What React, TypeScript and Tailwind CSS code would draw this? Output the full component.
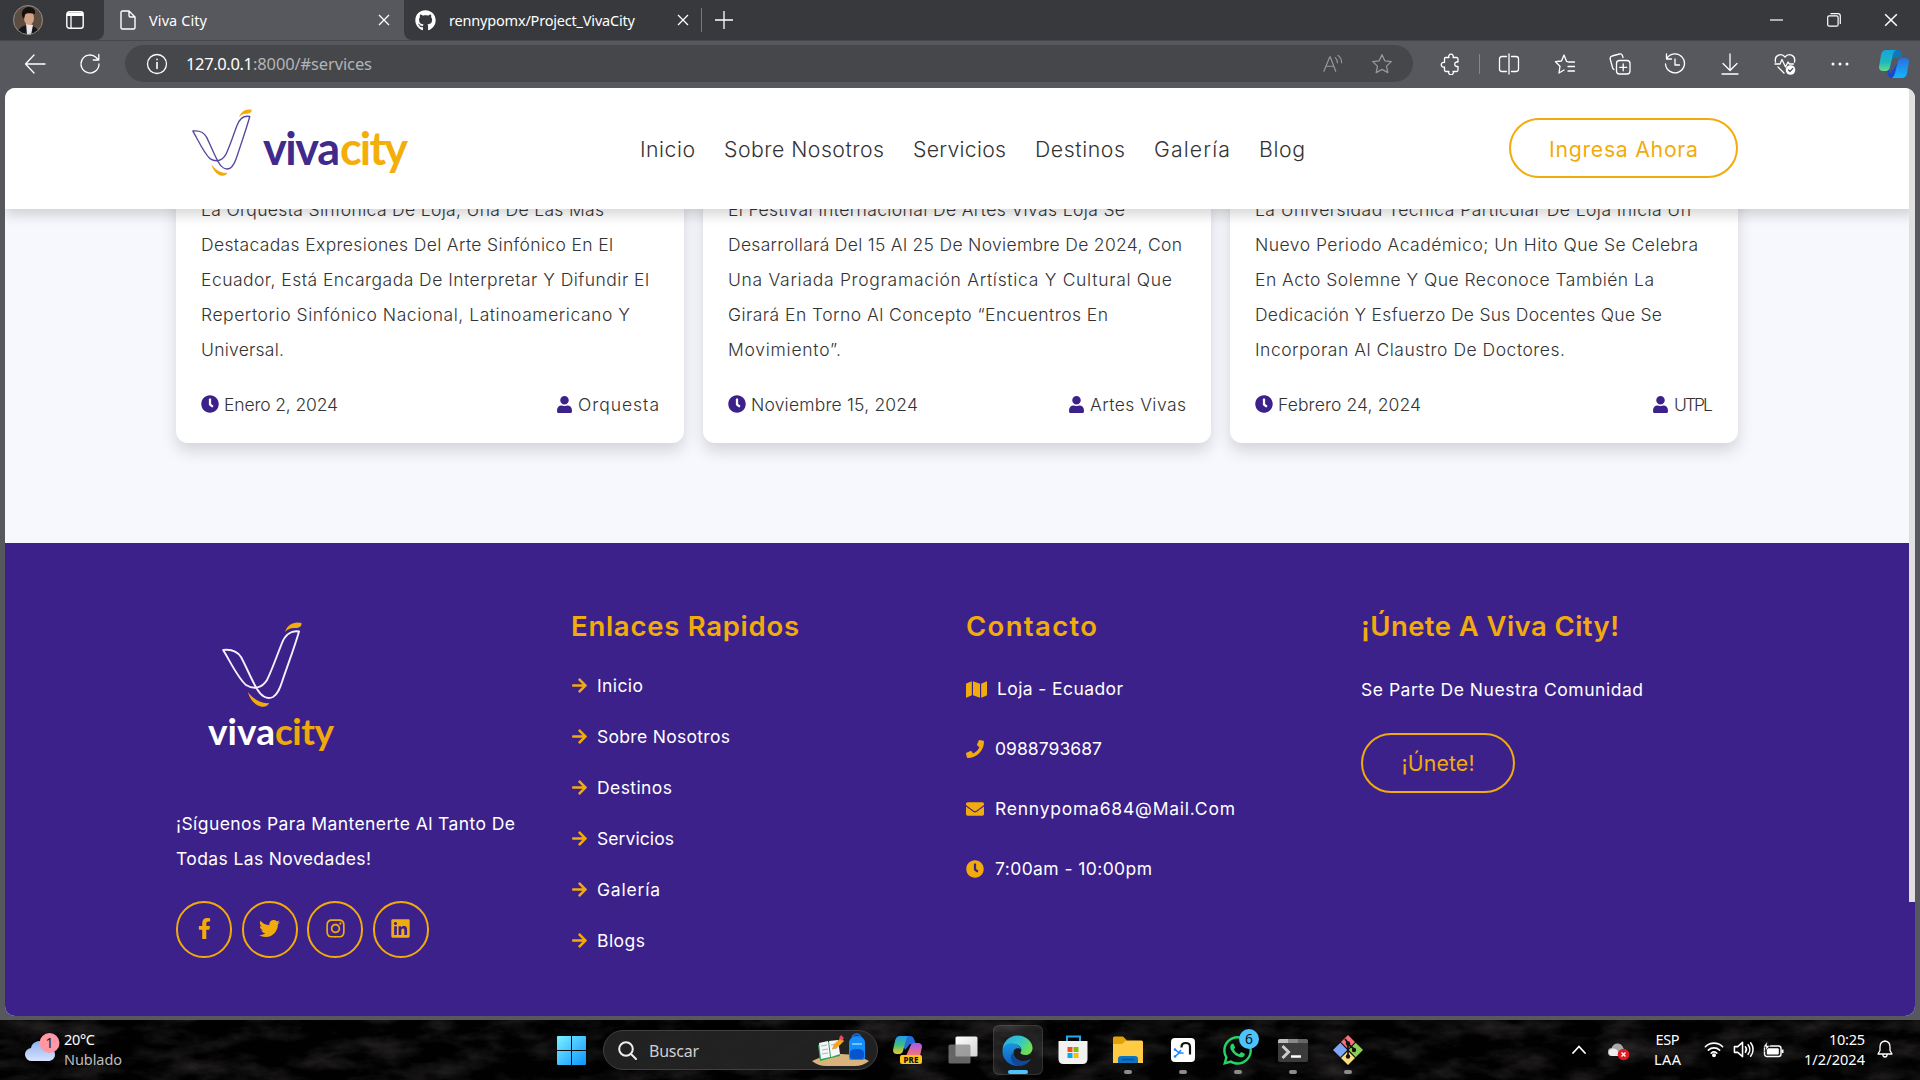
import { useLayoutEffect, useRef, useState } from "react";
import type { ReactNode } from "react";
import {
  FaArrowRight,
  FaClock,
  FaEnvelope,
  FaFacebookF,
  FaGithub,
  FaInstagram,
  FaLinkedin,
  FaMap,
  FaPhone,
  FaTwitter,
  FaUser,
  FaWhatsapp,
} from "react-icons/fa";

/* Text line whose tracking is adjusted so that it fills a given width. */
function Fit({ w, className = "", children }: { w: number; className?: string; children: ReactNode }) {
  const ref = useRef<HTMLSpanElement>(null);
  const [ls, setLs] = useState(0);
  useLayoutEffect(() => {
    const el = ref.current;
    if (!el) return;
    const prev = el.style.letterSpacing;
    el.style.letterSpacing = "0px";
    const natural = el.getBoundingClientRect().width;
    el.style.letterSpacing = prev;
    const n = (el.textContent || "").length;
    if (n > 1) setLs((w - natural) / (n - 1));
  }, [w]);
  return (
    <span className={"block whitespace-nowrap " + className} style={{ width: w }}>
      <span ref={ref} className="inline-block" style={{ letterSpacing: ls + "px" }}>
        {children}
      </span>
    </span>
  );
}

function Slot({ className, children }: { className: string; children?: ReactNode }) {
  return <div className={"flex shrink-0 items-center justify-center " + className}>{children}</div>;
}

function Line({ size = 22, children, className = "", sw = 1.3 }: { size?: number; children: ReactNode; className?: string; sw?: number }) {
  return (
    <svg width={size} height={size} viewBox="0 0 22 22" fill="none" stroke="currentColor" strokeWidth={sw} strokeLinecap="round" strokeLinejoin="round" className={"shrink-0 " + className}>
      {children}
    </svg>
  );
}

function Cross({ size = 12 }: { size?: number }) {
  return (
    <svg width={size} height={size} viewBox="0 0 12 12" stroke="currentColor" strokeWidth="1.3" className="shrink-0">
      <path d="M1 1l10 10M11 1L1 11" />
    </svg>
  );
}

function Mark({ w, h, stroke, sw }: { w: number; h: number; stroke: string; sw: number }) {
  return (
    <svg width={w} height={h} viewBox="0 0 80 85" preserveAspectRatio="none" fill="none" className="shrink-0">
      <path
        d="M1.2 28 C9 27 15 29 19 35 C24 44 29 57 35 67 C39 74 45 78 51 75 C56 72 58 66 60 60 C66 42 72 27 77 9.500 C69 8 63 13 60 21 C54 36 50 48 45 58 C40 66 32 68 24 63 C16 56 9 41 1.200 28 Z"
        stroke={stroke}
        strokeWidth={sw}
        strokeLinejoin="round"
      />
      <path d="M63 10 C65 3 72 -1 79.500 1 C80 5 76 6 72 6 C68 6 66 7 63 10Z" fill="#f2ab0c" />
      <path d="M26 70 C31 77 39 82 47 81 C46 85 40 86 35 83 C30 80 27 75 26 70Z" fill="#f2ab0c" />
    </svg>
  );
}

function TitleBar() {
  return (
    <div className="flex h-10 shrink-0 bg-[#57585d]">
      <div className="flex w-[104px] items-center rounded-br-lg bg-[#38393c]">
        <svg width="30" height="30" viewBox="0 0 30 30" className="ml-[13px]">
          <defs>
            <clipPath id="av"><circle cx="15" cy="15" r="15" /></clipPath>
          </defs>
          <g clipPath="url(#av)">
            <rect width="30" height="30" fill="#5d4c41" />
            <path d="M4 30c1-7 5-9 10-10l6 1c4 2 6 5 6 9z" fill="#15161a" />
            <path d="M13 18l7 2-2 10h-4z" fill="#e9e6e4" />
            <ellipse cx="16" cy="13" rx="5" ry="7" fill="#d3a184" />
            <path d="M9 11c-1-6 3-9 7-9s7 3 6 7c-3 0-8-2-10 1l-1 4z" fill="#14110f" />
          </g>
          <circle cx="15" cy="15" r="14.500" stroke="#8a8a8a" fill="none" />
        </svg>
        <svg width="18" height="18" viewBox="0 0 18 18" fill="none" className="ml-[23px]">
          <rect x="0.800" y="0.800" width="16.400" height="16.400" rx="2.500" stroke="#fff" strokeWidth="1.400" />
          <path d="M1 1.500h16v3.500H1z" fill="#fff" />
          <path d="M5 5v12" stroke="#fff" strokeWidth="1.300" />
        </svg>
      </div>
      <div className="flex w-[300px] items-center rounded-t-lg bg-[#57585d] text-white">
        <svg width="16" height="20" viewBox="0 0 16 20" fill="none" stroke="#fff" strokeWidth="1.400" strokeLinejoin="round" className="ml-4">
          <path d="M1 2.500Q1 1 2.500 1H9l6 6v10.500q0 1.500-1.500 1.500h-11Q1 19 1 17.500zM9 1v4.500Q9 7 10.500 7H15" />
        </svg>
        <Fit w={58} className="ml-[13px] pb-px text-[14.500px] leading-5">Viva City</Fit>
        <div className="ml-auto mr-[14px]"><Cross /></div>
      </div>
      <div className="flex flex-1 items-center rounded-bl-lg bg-[#38393c] text-white">
        <FaGithub size={21} className="ml-[11px]" />
        <Fit w={186} className="ml-[13px] pb-px text-[14.500px] leading-5">rennypomx/Project_VivaCity</Fit>
        <div className="ml-[42px]"><Cross /></div>
        <div className="ml-3 h-6 w-px bg-[#77787b]" />
        <svg width="18" height="18" viewBox="0 0 18 18" stroke="#fff" strokeWidth="1.300" className="ml-[13px]"><path d="M9 0v18M0 9h18" /></svg>
        <div className="ml-auto flex items-center">
          <Slot className="w-[57px]"><svg width="13" height="2" viewBox="0 0 13 2"><path d="M0 1h13" stroke="#fff" strokeWidth="1.200" /></svg></Slot>
          <Slot className="w-[57px]">
            <svg width="14" height="14" viewBox="0 0 14 14" fill="none" stroke="#fff" strokeWidth="1.200">
              <rect x="0.700" y="2.800" width="10.400" height="10.400" rx="1.500" />
              <path d="M3.500 0.700H11Q13.300 0.700 13.300 3v8" />
            </svg>
          </Slot>
          <Slot className="w-[58px]"><Cross size={14} /></Slot>
        </div>
      </div>
    </div>
  );
}

function Toolbar() {
  return (
    <div className="flex h-12 shrink-0 items-center border-t border-[#46474b] bg-[#57585d] pb-[2px] text-white">
      <Line className="ml-6"><path d="M21 11H1.500M10 2L1.500 11l8.500 9" /></Line>
      <Line className="ml-[33px]"><path d="M20 11a9 9 0 1 1-2.800-6.500L19.500 7M19.800 1.500V7h-5.500" /></Line>
      <div className="ml-6 flex h-[37px] w-[1288px] items-center rounded-full bg-[#46474a]">
        <Line className="ml-[21px]"><circle cx="11" cy="11" r="9.500" /><path d="M11 9.500v6M11 6.300v.3" strokeWidth="1.600" /></Line>
        <div className="ml-[18px] flex text-[16.500px] leading-5">
          <Fit w={67}>127.0.0.1</Fit>
          <Fit w={119} className="text-[#b3b4b6]">:8000/#services</Fit>
        </div>
        <div className="ml-auto flex items-center text-[#97989b]">
          <Line size={20} className="mr-7"><path d="M1 19L7.500 3h.4L14 19M3.300 13.500h8.600M13.500 4q2.300 2 2.300 5.500M16.500 1.500q4 3 4 8" /></Line>
          <Line className="mr-[20px]"><path d="M11 1.800l2.800 6 6.500.8-4.800 4.500 1.300 6.500-5.800-3.200-5.800 3.200 1.300-6.500L1.700 8.600l6.500-.8z" /></Line>
        </div>
      </div>
      <Slot className="ml-1.5 w-[60px] pl-[3px]">
        <Line><path d="M5.500 4.500H9a2.300 2.300 0 1 1 4 0h3.500q1.500 0 1.500 1.500v3h-1.500a2.300 2.300 0 0 0 0 4.500H18V17q0 1.500-1.500 1.500H13a2.300 2.300 0 1 1-4 0H6Q4.500 18.500 4.500 17v-3a2.400 2.400 0 1 1 0-4.500V6q0-1.500 1-1.500z" /></Line>
      </Slot>
      <div className="h-5 w-px bg-[#86878a]" />
      <Slot className="ml-px w-14">
        <Line><path d="M8.500 3.500H4Q1.500 3.500 1.500 6v10q0 2.500 2.500 2.500h4.500M13.500 3.500H18q2.500 0 2.500 2.500v10q0 2.500-2.500 2.500h-4.500M11 1v20" /></Line>
      </Slot>
      <Slot className="w-[55px]">
        <Line><path d="M20.500 9h-6l-2-.7L10 2 7.500 8l-6 .7 4.500 4.500L5 20l5-3M14 13.500h6.500M14 18h6.500" /></Line>
      </Slot>
      <Slot className="w-[55px]">
        <Line><rect x="7.500" y="7.500" width="13.500" height="13.500" rx="3" /><path d="M14.200 10.800v7M10.700 14.300h7M5 16.500Q3.800 16 3.500 14.500L1.200 6Q.8 3.700 3 3l7.500-2q2.200-.5 3 1.700l.5 1.800" /></Line>
      </Slot>
      <Slot className="w-[55px]">
        <Line><path d="M2.800 5.500A9.500 9.500 0 1 1 1.500 11M2.500 1v5h5M11 6v6h4.500" /></Line>
      </Slot>
      <Slot className="w-[55px]">
        <Line><path d="M11 1v16M4 10.500l7 7 7-7M3 21h16" /></Line>
      </Slot>
      <Slot className="w-[55px]">
        <Line><path d="M1.500 9C0 2 7.500-.5 11 4c3.500-4.500 11-2 9.500 5M1 11h5l2-4.500L11.500 14l2.500-5 1.500 2h4M4 14l6 6" /><circle cx="16.500" cy="17" r="4.800" fill="#fff" stroke="none" /><path d="M14.500 17l1.500 1.500 2.700-3" stroke="#57585d" /></Line>
      </Slot>
      <Slot className="w-[55px]">
        <svg width="18" height="4" viewBox="0 0 18 4" fill="#fff"><circle cx="2" cy="2" r="1.500" /><circle cx="9" cy="2" r="1.500" /><circle cx="16" cy="2" r="1.500" /></svg>
      </Slot>
      <Slot className="w-[53px]">
        <svg width="30" height="28" viewBox="0 0 30 28">
          <defs>
            <linearGradient id="cp1" x1="0" y1="0" x2="0" y2="1"><stop offset="0" stopColor="#12a5df" /><stop offset="0.600" stopColor="#25b8b8" /><stop offset="1" stopColor="#63dc8e" /></linearGradient>
            <linearGradient id="cp2" x1="0" y1="0" x2="0" y2="1"><stop offset="0" stopColor="#2c6fdc" /><stop offset="1" stopColor="#12b6fc" /></linearGradient>
          </defs>
          <path d="M7 0h11q3 0 4 3l1 5h-5q-3 0-4 4l-3 5-3-11z" fill="#0f76b8" />
          <path d="M8 20h6l6-10 2 12-3 6h-7q-2 0-3-3z" fill="#1748d4" />
          <path d="M7 0h10q-2 1-3 4l-3 13q-1 4-4 4H4q-4 0-4-4L2 5q1-5 5-5z" fill="url(#cp1)" />
          <path d="M23 28H13q2-1 3-5l3-12q1-3 4-3h3q4 0 4 4l-2 11q-1 5-5 5z" fill="url(#cp2)" />
          <path d="M16.500 9q-2 0-2.500 3l-3 11" stroke="#57585d" strokeWidth="2.500" fill="none" />
        </svg>
      </Slot>
    </div>
  );
}

const navItems: [string, number][] = [
  ["Inicio", 55],
  ["Sobre Nosotros", 160],
  ["Servicios", 93],
  ["Destinos", 90],
  ["Galería", 76],
  ["Blog", 46],
];

function SiteHeader() {
  return (
    <header className="relative z-10 flex h-[121px] shrink-0 bg-white pl-[187px] pr-[177px] shadow-[0_6px_12px_rgba(0,0,0,0.16)]">
      <div className="mt-[21px] flex">
        <Mark w={60} h={67} stroke="#55479c" sw={1.8} />
        <div className="ml-[11px] mt-[14px] flex font-['Lato'] text-[45px] font-bold leading-[50px]">
          <Fit w={77} className="text-[#402a8c]">viva</Fit>
          <Fit w={68} className="text-[#f4ae0a]">city</Fit>
        </div>
      </div>
      <nav className="ml-[232px] mt-[46px] flex gap-[29px] text-[21.250px] font-light leading-[30px] text-[#333]">
        {navItems.map(([t, w]) => (
          <Fit key={t} w={w}>{t}</Fit>
        ))}
      </nav>
      <div className="ml-auto mt-[30px] flex h-[60px] w-[229px] items-center justify-center rounded-full border-2 border-[#f2ab0c] pt-[2px] text-[21.250px] leading-[30px] text-[#f2ab0c]">
        <Fit w={149}>Ingresa Ahora</Fit>
      </div>
    </header>
  );
}

const posts: { lines: [string, number][]; date: string; dw: number; by: string; bw: number }[] = [
  {
    lines: [
      ["La Orquesta Sinfónica De Loja, Una De Las Más", 403],
      ["Destacadas Expresiones Del Arte Sinfónico En El", 412],
      ["Ecuador, Está Encargada De Interpretar Y Difundir El", 448],
      ["Repertorio Sinfónico Nacional, Latinoamericano Y", 429],
      ["Universal.", 83],
    ],
    date: "Enero 2, 2024", dw: 114, by: "Orquesta", bw: 81,
  },
  {
    lines: [
      ["El Festival Internacional De Artes Vivas Loja Se", 397],
      ["Desarrollará Del 15 Al 25 De Noviembre De 2024, Con", 454],
      ["Una Variada Programación Artística Y Cultural Que", 444],
      ["Girará En Torno Al Concepto “Encuentros En", 380],
      ["Movimiento”.", 113],
    ],
    date: "Noviembre 15, 2024", dw: 167, by: "Artes Vivas", bw: 96,
  },
  {
    lines: [
      ["La Universidad Técnica Particular De Loja Inicia Un", 436],
      ["Nuevo Periodo Académico; Un Hito Que Se Celebra", 443],
      ["En Acto Solemne Y Que Reconoce También La", 399],
      ["Dedicación Y Esfuerzo De Sus Docentes Que Se", 407],
      ["Incorporan Al Claustro De Doctores.", 310],
    ],
    date: "Febrero 24, 2024", dw: 143, by: "UTPL", bw: 39,
  },
];

function Posts() {
  return (
    <section className="flex h-[334px] shrink-0 items-start gap-[19px] bg-[#f7f8fd] pl-[171px]">
      {posts.map((p) => (
        <article key={p.date} className="-mt-[17px] h-[251px] w-[508px] rounded-b-xl bg-white px-[25px] text-[17.500px] font-light text-[#333] shadow-[0_8px_16px_rgba(0,0,0,0.14)]">
          {p.lines.map(([t, w]) => (
            <Fit key={t} w={w} className="leading-[35px]">{t}</Fit>
          ))}
          <div className="mt-[24px] flex items-center leading-6">
            <FaClock size={18} className="text-[#3d218b]" />
            <Fit w={p.dw} className="ml-[5px] pt-[2px]">{p.date}</Fit>
            <FaUser size={17} className="ml-auto text-[#3d218b]" />
            <Fit w={p.bw} className="ml-[5px] pt-[2px]">{p.by}</Fit>
          </div>
        </article>
      ))}
    </section>
  );
}

const links: [string, number][] = [
  ["Inicio", 46],
  ["Sobre Nosotros", 133],
  ["Destinos", 75],
  ["Servicios", 77],
  ["Galería", 63],
  ["Blogs", 48],
];

function Footer() {
  const contacts: { icon: ReactNode; text: string; w: number; gap: string }[] = [
    { icon: <FaMap size={21} />, text: "Loja - Ecuador", w: 126, gap: "ml-[10px]" },
    { icon: <FaPhone size={18} />, text: "0988793687", w: 107, gap: "ml-[11px]" },
    { icon: <FaEnvelope size={18} />, text: "Rennypoma684@Mail.Com", w: 240, gap: "ml-[11px]" },
    { icon: <FaClock size={18} />, text: "7:00am - 10:00pm", w: 157, gap: "ml-[11px]" },
  ];
  return (
    <footer className="flex flex-1 bg-[#3d218b] pl-[171px] text-[17.500px] text-white">
      <div className="w-[395px] shrink-0 pt-[79px]">
        <div className="ml-[46px]"><Mark w={80} h={85} stroke="#f3f1fa" sw={1.9} /></div>
        <div className="ml-[32px] mt-[4px] flex h-[40px] items-center font-['Lato'] text-[37px] font-bold leading-10">
          <Fit w={67}>viva</Fit>
          <Fit w={59} className="text-[#f0a90d]">city</Fit>
        </div>
        <div className="mt-[55px] leading-[35px]">
          <Fit w={339}>¡Síguenos Para Mantenerte Al Tanto De</Fit>
          <Fit w={195}>Todas Las Novedades!</Fit>
        </div>
        <div className="mt-[25px] flex gap-[9.500px] text-[#f2ab0c]">
          {[FaFacebookF, FaTwitter, FaInstagram, FaLinkedin].map((Icon, i) => (
            <div key={i} className="flex h-[57px] w-[56px] items-center justify-center rounded-full border-2 border-[#f2ab0c] pb-[3px]">
              <Icon size={21} />
            </div>
          ))}
        </div>
      </div>
      <div className="w-[395px] shrink-0 pt-[63px]">
        <Fit w={228} className="text-[27.500px] font-semibold leading-10 text-[#f2ab0c]">Enlaces Rapidos</Fit>
        <div className="mt-[14px]">
          {links.map(([t, w]) => (
            <div key={t} className="flex h-[51px] items-center">
              <FaArrowRight size={17} className="text-[#f2ab0c]" />
              <Fit w={w} className="ml-[9px] leading-6">{t}</Fit>
            </div>
          ))}
        </div>
      </div>
      <div className="w-[395px] shrink-0 pt-[63px]">
        <Fit w={131} className="text-[27.500px] font-semibold leading-10 text-[#f2ab0c]">Contacto</Fit>
        <div className="mt-[13px]">
          {contacts.map((c) => (
            <div key={c.text} className="flex h-[60px] items-center">
              <span className="text-[#f2ab0c]">{c.icon}</span>
              <Fit w={c.w} className={c.gap + " leading-6"}>{c.text}</Fit>
            </div>
          ))}
        </div>
      </div>
      <div className="pt-[63px]">
        <Fit w={258} className="text-[27.500px] font-semibold leading-10 text-[#f2ab0c]">¡Únete A Viva City!</Fit>
        <Fit w={282} className="mt-[32px] leading-6">Se Parte De Nuestra Comunidad</Fit>
        <div className="mt-[31px] flex h-[60px] w-[154px] items-center justify-center rounded-full border-2 border-[#f2ab0c] text-[21.250px] text-[#f2ab0c]">
          <Fit w={73} className="leading-[30px]">¡Únete!</Fit>
        </div>
      </div>
    </footer>
  );
}

function TaskApp({ children, dot }: { children: ReactNode; dot?: boolean }) {
  return (
    <div className="flex h-[60px] w-[55px] shrink-0 flex-col items-center">
      <div className="mt-[10px] flex h-10 items-center">{children}</div>
      {dot && <div className="h-1 w-2 rounded-full bg-[#8c8c8c]" />}
    </div>
  );
}

function Taskbar() {
  return (
    <div className="relative flex h-[60px] shrink-0 items-center overflow-hidden bg-[#050506] text-white">
      <svg width="1920" height="60" viewBox="0 0 1920 60" className="absolute inset-0">
        <defs>
          <filter id="rock" x="0" y="0" width="100%" height="100%" colorInterpolationFilters="sRGB">
            <feTurbulence type="fractalNoise" baseFrequency="0.020 0.050" numOctaves="5" seed="8" />
            <feColorMatrix values="0.420 0 0 0 -0.170  0.400 0 0 0 -0.165  0.390 0 0 0 -0.160  0 0 0 0 1" />
          </filter>
        </defs>
        <rect width="1920" height="60" filter="url(#rock)" opacity="0.700" />
      </svg>
      <div className="relative flex w-full items-center">
        <svg width="36" height="30" viewBox="0 0 36 30" className="mb-1 ml-[25px]">
          <defs><linearGradient id="cl" x1="0" y1="0" x2="0" y2="1"><stop offset="0" stopColor="#8fb1ef" /><stop offset="1" stopColor="#d5e3fc" /></linearGradient></defs>
          <path d="M7 28a6.500 6.500 0 0 1-1-13C7 10 11 8 15 8c5 0 8 3 9 7 3 0 6 2.500 6 6.500S27 28 23 28z" fill="url(#cl)" />
          <circle cx="24.500" cy="10" r="10" fill="#ff98a4" />
          <text x="24.500" y="15" textAnchor="middle" fontSize="14" fontFamily="Noto Sans" fill="#222">1</text>
        </svg>
        <div className="mb-[2px] ml-[3px] text-[14.500px] leading-[20px]">
          <Fit w={31}>20°C</Fit>
          <Fit w={58} className="text-[#bdbdbd]">Nublado</Fit>
        </div>
        <svg width="29" height="29" viewBox="0 0 29 29" className="ml-[435px]">
          <defs><linearGradient id="win" x1="0" y1="0" x2="1" y2="1"><stop offset="0" stopColor="#7df0ff" /><stop offset="1" stopColor="#0a95ff" /></linearGradient></defs>
          <path d="M0 1q0-1 1-1h13v14H0zM15 0h13q1 0 1 1v13H15zM0 15h14v14H1q-1 0-1-1zM15 15h14v13q0 1-1 1H15z" fill="url(#win)" />
        </svg>
        <div className="ml-[17px] flex h-10 w-[275px] items-center rounded-full border border-[#404040] bg-[#252525]/90">
          <svg width="19" height="19" viewBox="0 0 19 19" fill="none" stroke="#eee" strokeWidth="2" strokeLinecap="round" className="ml-[14px]"><circle cx="8" cy="8" r="6.800" /><path d="M13 13l5 5" /></svg>
          <Fit w={50} className="ml-[12px] pt-[2px] text-[16px] leading-6 text-[#cfcfcf]">Buscar</Fit>
          <svg width="58" height="34" viewBox="0 0 58 34" className="ml-auto mr-[7px]">
            <path d="M0 28Q14 21 29 21q16 0 28 7-6 5-14 5H14Q6 33 0 28z" fill="#d9b27c" />
            <path d="M6 12l10-3 9-1 3 15-9 2-11 3z" fill="#2f9e56" />
            <path d="M7 10l9-2 2 16-9 2zM17 8l9-1 2 14-9 3z" fill="#f4f6fa" />
            <path d="M9 13l6-1M10 17l6-1M10 21l6-1M19 12l5-1M20 16l5-1" stroke="#a9b3c0" />
            <path d="M20 16l2-5 7-6 3 3-7 7z" fill="#f6a41f" /><path d="M27 5l2-3 3 3-2 3z" fill="#ea4a5e" />
            <path d="M40 4q5-6 9 0" stroke="#1a66c9" strokeWidth="2" fill="none" />
            <path d="M37 11q0-8 8-8t8 8v13q0 3-3 3H39q-2 0-2-3z" fill="#148dfa" />
            <path d="M38 20q0-4 7-4t7 4v3q0 3-3 3h-8q-3 0-3-3z" fill="#0754cf" /><path d="M40 11h10" stroke="#74c5ff" strokeWidth="2" />
          </svg>
        </div>
        <div className="ml-[2px] flex">
          <TaskApp>
            <svg width="30" height="30" viewBox="0 0 30 30">
              <defs>
                <linearGradient id="pa" x1="0" y1="0" x2="0" y2="1"><stop offset="0" stopColor="#2697f2" /><stop offset="0.500" stopColor="#3dc07b" /><stop offset="1" stopColor="#f5c62a" /></linearGradient>
                <linearGradient id="pb" x1="0" y1="0" x2="0" y2="1"><stop offset="0" stopColor="#a35bf5" /><stop offset="1" stopColor="#ff7467" /></linearGradient>
              </defs>
              <path d="M6 1h11q3 0 4 3l2 5h-6l-5 6z" fill="#1f6fdc" />
              <path d="M7 1h8q-1 1-2 4l-3 11q-1 3-4 3H4q-4 0-4-4L2 6q1-5 5-5z" fill="url(#pa)" />
              <path d="M13 21l4-9q1-4 4-4h4q4 0 4 4l-2 9z" fill="url(#pb)" />
              <rect x="7" y="20" width="22" height="9" rx="2" fill="#ffc61a" />
              <text x="18" y="27.500" textAnchor="middle" fontSize="8" fontWeight="800" fontFamily="Noto Sans" fill="#111">PRE</text>
            </svg>
          </TaskApp>
          <TaskApp>
            <svg width="30" height="28" viewBox="0 0 30 28">
              <defs><linearGradient id="tv" x1="0" y1="0" x2="1" y2="1"><stop offset="0" stopColor="#fff" /><stop offset="1" stopColor="#d4d4d4" /></linearGradient></defs>
              <rect x="7.500" y="0.500" width="22" height="20" rx="1.500" fill="url(#tv)" />
              <rect x="0.500" y="8.500" width="22" height="19" rx="1.500" fill="#858585" fillOpacity="0.750" />
            </svg>
          </TaskApp>
          <div className="flex h-[60px] w-[55px] flex-col items-center">
            <div className="mt-[5px] flex h-[50px] w-[50px] flex-col items-center rounded-md border border-white/10 bg-white/10">
              <svg width="31" height="31" viewBox="0 0 31 31" className="mt-[9px] shrink-0">
                <defs>
                  <linearGradient id="ea" x1="0" y1="0" x2="1" y2="0.500"><stop offset="0" stopColor="#2aa7e8" /><stop offset="0.600" stopColor="#34c7cb" /><stop offset="1" stopColor="#6ee04f" /></linearGradient>
                  <linearGradient id="eb" x1="0" y1="0" x2="0" y2="1"><stop offset="0" stopColor="#1b94e0" /><stop offset="1" stopColor="#1059b8" /></linearGradient>
                </defs>
                <path d="M.5 15C1 7 7 .5 15.500 .5S31 7 30.500 13.500c-.3 4-3 6.500-7 6.500-4 0-6-1.500-4.500-3.500 1-2 0-6-5-7S2 11 .5 15z" fill="url(#ea)" />
                <path d="M.5 16C1 9 8 7 13.500 9c3 1 5 3 5.500 5-5-2-8 1-7.500 4.500.5 5 5.500 8 10.500 7.500 3 0 5-1 7-2-3 4.500-8 7-13.500 7C7 31 0 24 .5 16z" fill="url(#eb)" />
                <path d="M11.500 18c0 5 5 8.500 10.500 8 3 0 4.500-.7 6.300-1.600-2.300 4-7.500 6.500-12.300 6.600C8 28 7 20 11.500 18z" fill="#11489b" />
              </svg>
              <div className="mt-[4px] h-1 w-5 shrink-0 rounded-full bg-[#4cc2ff]" />
            </div>
          </div>
          <TaskApp>
            <svg width="30" height="30" viewBox="0 0 30 30">
              <path d="M9 6V1.500h13V6" fill="none" stroke="#27a9e8" strokeWidth="2" />
              <path d="M.5 6h29v18q0 5-5 5h-19q-5 0-5-5z" fill="#f2f2f2" />
              <path d="M9.500 12h5v5h-5z" fill="#f1511b" /><path d="M15.500 12h5v5h-5z" fill="#80bc06" /><path d="M9.500 18h5v5h-5z" fill="#00adef" /><path d="M15.500 18h5v5h-5z" fill="#fbbc09" />
            </svg>
          </TaskApp>
          <TaskApp dot>
            <svg width="30" height="28" viewBox="0 0 30 28">
              <path d="M0 2q0-1.500 1.500-1.500H10L13.500 4v5H0z" fill="#e0a10b" />
              <path d="M0 8h9l4-3.500h15.500Q30 4.500 30 6v21H0z" fill="#ffcb42" />
              <path d="M5 27v-4q0-3 3-3h14q3 0 3 3v4z" fill="#0e73c4" /><path d="M9 23.500h12" stroke="#0a4f92" strokeWidth="1.500" />
            </svg>
          </TaskApp>
          <TaskApp dot>
            <svg width="24" height="24" viewBox="0 0 24 24" fill="none">
              <rect width="24" height="24" rx="4" fill="#fff" />
              <path d="M10.500 9.500V9q0-4 4.300-4T19 9v7.500" stroke="#111" strokeWidth="2.200" />
              <path d="M4 11.500l4 3.500-4 3.500M7 15h5.500M10 12l-2.500 3" stroke="#1c86ff" strokeWidth="1.600" /><circle cx="4" cy="11.500" r="1.300" fill="#1c86ff" /><circle cx="4" cy="18.500" r="1.300" fill="#1c86ff" />
            </svg>
          </TaskApp>
          <TaskApp dot>
            <div className="relative">
              <FaWhatsapp size={33} className="text-[#25d366]" />
              <div className="absolute -right-[5px] -top-[5px] flex h-5 w-5 items-center justify-center rounded-full bg-[#4cc2ff] text-[14px] leading-5 text-[#111]">6</div>
            </div>
          </TaskApp>
          <TaskApp dot>
            <svg width="30" height="23" viewBox="0 0 30 23">
              <rect width="30" height="23" rx="2" fill="#3b3b3b" /><path d="M0 4V2q0-2 2-2h8v4z" fill="#bdbdbd" /><path d="M10 0h10v4H10z" fill="#888" /><path d="M20 0h8q2 0 2 2v2H20z" fill="#666" />
              <path d="M4.500 7l6 6-6 6" stroke="#ccc" strokeWidth="3" fill="none" /><path d="M13 17.500h10" stroke="#fff" strokeWidth="2.500" />
            </svg>
          </TaskApp>
          <TaskApp dot>
            <svg width="30" height="30" viewBox="0 0 30 30">
              <path d="M15 0l7 7-7 7-7-7z" fill="#f4717a" /><path d="M7.300 7.700l7 7.300-7 7.300L0 15z" fill="#7ea6f5" /><path d="M22.700 7.700L30 15l-7.300 7.300-7-7.300z" fill="#8ccf55" /><path d="M15 16l7 7-7 7-7-7z" fill="#fbdc7c" />
              <path d="M12 4l3 4v13M15 9l6 5" stroke="#111" strokeWidth="1.700" fill="none" /><circle cx="15" cy="8.500" r="2.200" fill="#111" /><circle cx="21" cy="15" r="2.200" fill="#111" /><circle cx="15" cy="21.500" r="2.200" fill="#111" />
            </svg>
          </TaskApp>
        </div>
        <div className="mb-[2px] ml-auto mr-[27px] flex items-center">
          <svg width="14" height="9" viewBox="0 0 14 9" fill="none" stroke="#fff" strokeWidth="1.800" strokeLinecap="round"><path d="M1 8l6-6.500L13 8" /></svg>
          <svg width="22" height="20" viewBox="0 0 22 20" className="ml-[22px] mt-1">
            <path d="M4 15a4 4 0 0 1-.5-8C5 3 8 2 10.500 2.500c3 .5 4.500 3 5 5 3 .5 3.500 7.500-1 7.500z" fill="#a9a9a9" /><path d="M1 13q-1-5 4-5.500 3-.5 5 2.500v5H4q-2 0-3-2z" fill="#eee" />
            <circle cx="15.500" cy="13.500" r="5.800" fill="#e01b25" /><path d="M13.500 11.500l4 4M17.500 11.500l-4 4" stroke="#fff" strokeWidth="1.400" />
          </svg>
          <div className="ml-[24px] text-[14.500px] leading-5">
            <div className="flex justify-center"><Fit w={24}>ESP</Fit></div>
            <div className="flex justify-center"><Fit w={27}>LAA</Fit></div>
          </div>
          <Line size={20} sw={1.8} className="ml-[23px]"><path d="M1.500 8.500a13.500 13.500 0 0 1 19 0M4.800 12.200a9 9 0 0 1 12.400 0M8 15.500a4.500 4.500 0 0 1 6 0" /><circle cx="11" cy="18" r="1.300" fill="currentColor" /></Line>
          <Line size={21} sw={1.6} className="ml-[9px]"><path d="M1.500 8h3.500L10 3.500v15L5 14H1.500zM13 8.200a4.500 4.500 0 0 1 0 5.600M15.800 6a8 8 0 0 1 0 10M18.500 4a11 11 0 0 1 0 14" /></Line>
          <svg width="21" height="17" viewBox="0 0 21 17" fill="none" className="ml-[9px]"><rect x="1.500" y="5" width="16.500" height="10.500" rx="2.500" stroke="#fff" strokeWidth="1.400" /><rect x="3.800" y="7.200" width="12" height="6.200" rx="1" fill="#fff" /><path d="M19.500 8.500v3.500" stroke="#fff" strokeWidth="2" /><path d="M4.500 0L0 6h3l-1 4.500L7 4.500H4z" fill="#fff" stroke="#080808" strokeWidth="0.700" /></svg>
          <div className="ml-[20px] text-[14.500px] leading-5">
            <div className="flex justify-end"><Fit w={36}>10:25</Fit></div>
            <Fit w={61}>1/2/2024</Fit>
          </div>
          <svg width="16" height="18" viewBox="0 0 16 18" fill="none" stroke="#fff" strokeWidth="1.300" strokeLinejoin="round" className="ml-[12px]"><path d="M8 1Q13 1.500 13 7v3.500l2 3.500H1l2-3.500V7Q3 1.500 8 1zM5.800 14q0 3 2.200 3t2.200-3" /></svg>
        </div>
      </div>
    </div>
  );
}

export default function App() {
  return (
    <div className="flex h-[1080px] w-[1920px] flex-col overflow-hidden bg-[#57585d] font-['Noto_Sans',sans-serif]">
      <TitleBar />
      <Toolbar />
      <main className="relative mx-[5px] flex h-[928px] shrink-0 flex-col overflow-hidden rounded-[10px] bg-[#f7f8fd] font-['Inter',sans-serif]">
        <SiteHeader />
        <Posts />
        <Footer />
        <div className="absolute right-0 top-0 z-20 h-[814px] w-[6px] bg-[#e0e0e1]" />
      </main>
      <div className="h-1 shrink-0 bg-[#57585d]" />
      <Taskbar />
    </div>
  );
}
